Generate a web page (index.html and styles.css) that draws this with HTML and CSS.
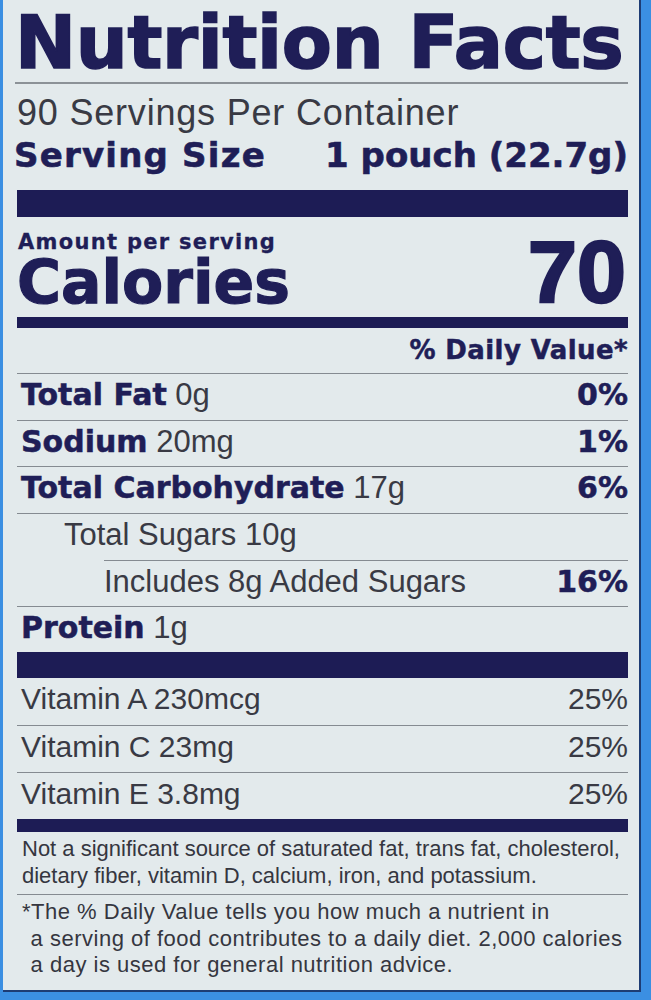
FILE: index.html
```html
<!DOCTYPE html>
<html lang="en">
<head>
<meta charset="utf-8">
<title>Nutrition Facts</title>
<link rel="stylesheet" href="styles.css">
</head>
<body>
<div class="panel">
  <h1 class="title">Nutrition Facts</h1>
  <div class="servings">90 Servings Per Container</div>
  <div class="size"><span>Serving Size</span><span>1 pouch (22.7g)</span></div>
  <div class="bar bar-top"></div>
  <div class="amount">Amount per serving</div>
  <div class="calories"><span class="cal-label">Calories</span><span class="cal-value">70</span></div>
  <div class="bar bar-medium"></div>
  <div class="dv-head">% Daily Value*</div>

  <div class="row"><span class="name"><b>Total Fat</b> 0g</span><b class="pct">0%</b></div>
  <div class="row"><span class="name"><b>Sodium</b> 20mg</span><b class="pct">1%</b></div>
  <div class="row"><span class="name"><b>Total Carbohydrate</b> 17g</span><b class="pct">6%</b></div>
  <div class="row row-sub"><span class="name">Total Sugars 10g</span></div>
  <div class="row row-sub2"><span class="name">Includes 8g Added Sugars</span><b class="pct">16%</b></div>
  <div class="row row-last"><span class="name"><b>Protein</b> 1g</span></div>
  <div class="bar bar-mid"></div>

  <div class="row row-vit row-first"><span class="name">Vitamin A 230mcg</span><span class="pct-reg">25%</span></div>
  <div class="row row-vit"><span class="name">Vitamin C 23mg</span><span class="pct-reg">25%</span></div>
  <div class="row row-vit"><span class="name">Vitamin E 3.8mg</span><span class="pct-reg">25%</span></div>
  <div class="bar bar-bottom"></div>

  <p class="note">Not a significant source of saturated fat, trans fat, cholesterol,<br>dietary fiber, vitamin D, calcium, iron, and potassium.</p>
  <p class="note note-dv">*The % Daily Value tells you how much a nutrient in<br>a serving of food contributes to a daily diet. 2,000 calories<br>a day is used for general nutrition advice.</p>
</div>
</body>
</html>
```

FILE: styles.css
```css
* {
  box-sizing: border-box;
  margin: 0;
  padding: 0;
}

html, body {
  width: 651px;
  height: 1000px;
  overflow: hidden;
}

body {
  background: #3b8fe2;
  font-family: "Liberation Sans", Arial, sans-serif;
  color: #1f1e57;
}

.panel {
  margin-left: 3px;
  width: 638px;
  height: 992px;
  background: #e3eaec;
  border-right: 2px solid #1d3c74;
  border-bottom: 2px solid #1d3c74;
  padding: 0 11px 0 14px;
}

b {
  font-family: "DejaVu Sans", sans-serif;
  font-weight: 700;
  color: #1f1e57;
  -webkit-text-stroke: 0.5px #1f1e57;
}

.title {
  font-family: "DejaVu Sans", sans-serif;
  font-weight: 700;
  font-size: 73px;
  letter-spacing: -0.3px;
  line-height: 60px;
  padding-top: 13px;
  padding-bottom: 9px;
  margin-left: -2px;
  border-bottom: 2px solid #8c9297;
  white-space: nowrap;
  -webkit-text-stroke: 1.6px #1f1e57;
}

.servings {
  margin-top: 8.5px;
  font-size: 36px;
  line-height: 40px;
  letter-spacing: 0.8px;
  color: #393a44;
}

.size {
  margin-top: 2.5px;
  display: flex;
  justify-content: space-between;
  font-family: "DejaVu Sans", sans-serif;
  font-weight: 700;
  font-size: 34px;
  line-height: 40px;
  margin-left: -3px;
  -webkit-text-stroke: 0.6px #1f1e57;
}

.size span:first-child {
  letter-spacing: 1.2px;
}

.bar {
  background: #1d1c55;
}

.bar-top {
  height: 27px;
  margin-top: 15px;
}

.bar-mid {
  height: 26px;
}

.amount {
  margin-top: 13px;
  font-family: "DejaVu Sans", sans-serif;
  font-weight: 700;
  font-size: 21px;
  letter-spacing: 1.3px;
  line-height: 20px;
  height: 24px;
  padding-top: 2px;
  padding-left: 1px;
  -webkit-text-stroke: 0.3px #1f1e57;
}

.calories {
  display: flex;
  justify-content: space-between;
  align-items: flex-start;
  height: 56px;
}

.cal-label {
  font-family: "DejaVu Sans", sans-serif;
  font-weight: 700;
  font-size: 60px;
  line-height: 56px;
  -webkit-text-stroke: 1.2px #1f1e57;
}

.cal-value {
  font-family: "Liberation Sans", Arial, sans-serif;
  font-weight: 700;
  font-size: 88px;
  line-height: 36.7px;
  -webkit-text-stroke: 2.5px #1f1e57;
  padding-right: 2px;
  white-space: nowrap;
}

.bar-medium {
  height: 11px;
  margin-top: 7px;
}

.dv-head {
  height: 45px;
  line-height: 45px;
  text-align: right;
  font-family: "DejaVu Sans", sans-serif;
  font-weight: 700;
  font-size: 26px;
  letter-spacing: 0.4px;
  -webkit-text-stroke: 0.5px #1f1e57;
}

.row {
  display: flex;
  justify-content: space-between;
  height: 46.67px;
  border-top: 1.5px solid #858b91;
  line-height: 42px;
  font-size: 31px;
  color: #393a44;
  padding-left: 4px;
  white-space: nowrap;
}

.row b {
  font-size: 30px;
}

.row-sub {
  padding-left: 47px;
}

.row-sub2 {
  margin-left: 87px;
  padding-left: 0;
}

.row-last {
  height: 46px;
}

.pct {
  font-size: 30px;
}

.row-vit {
  font-size: 30px;
  line-height: 42px;
  padding-left: 4px;
}

.row-first {
  border-top: none;
  height: 47px;
}

.pct-reg {
  font-size: 30px;
}

.bar-bottom {
  height: 13px;
}

.note {
  font-size: 22px;
  line-height: 27px;
  color: #35363f;
  padding: 3px 0 5px 5px;
  border-bottom: 1.5px solid #858b91;
  white-space: nowrap;
}

.note-dv {
  border-bottom: none;
  line-height: 26.5px;
  letter-spacing: 0.5px;
  padding: 4.5px 0 0 13.6px;
  text-indent: -8.6px;
}
```
